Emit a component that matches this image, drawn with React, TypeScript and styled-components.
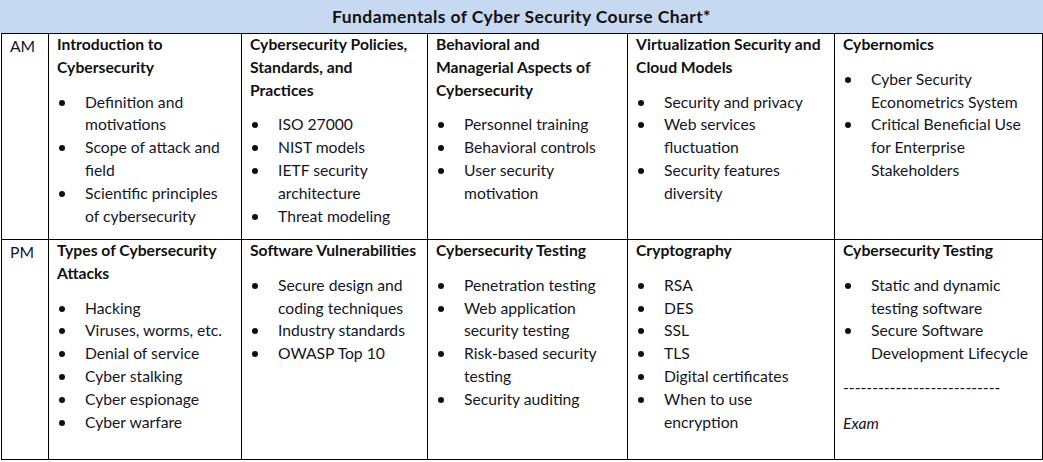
import React, { Fragment } from "react";
import styled, { createGlobalStyle } from "styled-components";

const GlobalStyle = createGlobalStyle`
  html, body {
    margin: 0;
    padding: 0;
    background: #ffffff;
  }
  body {
    font-family: Lato, "Open Sans", "Liberation Sans", sans-serif;
    color: #151525;
  }
`;

const Page = styled.div`
  width: 1043px;
  height: 462px;
  background: #fff;
`;

const TitleBar = styled.div`
  height: 33px;
  background: #c6d9f1;
  display: flex;
  align-items: center;
  justify-content: center;
  font-weight: 700;
  font-size: 17.5px;
  letter-spacing: 0.4px;
  color: #111;
`;

const Chart = styled.table`
  margin-left: 1px;
  width: 1041px;
  border-collapse: collapse;
  table-layout: fixed;
  border-top: 1px solid #000;

  td {
    border: 1px solid #000;
    vertical-align: top;
    padding: 0 8px;
    font-size: 15.7px;
    line-height: 22.8px;
  }
`;

const Row = styled.tr<{ $height: number }>`
  height: ${(p) => p.$height}px;
`;

const Label = styled.td`
  font-weight: 400;
  && {
    padding-top: 1px;
  }
`;

const Heading = styled.div`
  font-weight: 700;
  white-space: pre;
  margin: -1px 0 12px;
  color: #111;
`;

const List = styled.ul<{ $gap?: number }>`
  list-style: none;
  margin: 0 0 ${(p) => p.$gap ?? 0}px;
  padding: 0;
`;

const Item = styled.li`
  display: grid;
  grid-template-columns: 28px 1fr;
  white-space: pre;

  &::before {
    content: "";
    width: 6px;
    height: 6px;
    border-radius: 50%;
    background: #111;
    margin: 9px 0 0 2px;
  }
`;

const Rule = styled.div`
  margin-bottom: 13px;
  white-space: nowrap;
`;

const Note = styled.div`
  font-style: italic;
`;

type Topic = {
  title: string;
  items: string[];
  extra?: boolean;
};

type Session = {
  label: string;
  height: number;
  topics: Topic[];
};

const sessions: Session[] = [
  {
    label: "AM",
    height: 206,
    topics: [
      {
        title: "Introduction to\nCybersecurity",
        items: [
          "Definition and\nmotivations",
          "Scope of attack and\nfield",
          "Scientific principles\nof cybersecurity",
        ],
      },
      {
        title: "Cybersecurity Policies,\nStandards, and\nPractices",
        items: ["ISO 27000", "NIST models", "IETF security\narchitecture", "Threat modeling"],
      },
      {
        title: "Behavioral and\nManagerial Aspects of\nCybersecurity",
        items: ["Personnel training", "Behavioral controls", "User security\nmotivation"],
      },
      {
        title: "Virtualization Security and\nCloud Models",
        items: ["Security and privacy", "Web services\nfluctuation", "Security features\ndiversity"],
      },
      {
        title: "Cybernomics",
        items: [
          "Cyber Security\nEconometrics System",
          "Critical Beneficial Use\nfor Enterprise\nStakeholders",
        ],
      },
    ],
  },
  {
    label: "PM",
    height: 220,
    topics: [
      {
        title: "Types of Cybersecurity\nAttacks",
        items: [
          "Hacking",
          "Viruses, worms, etc.",
          "Denial of service",
          "Cyber stalking",
          "Cyber espionage",
          "Cyber warfare",
        ],
      },
      {
        title: "Software Vulnerabilities",
        items: ["Secure design and\ncoding techniques", "Industry standards", "OWASP Top 10"],
      },
      {
        title: "Cybersecurity Testing",
        items: [
          "Penetration testing",
          "Web application\nsecurity testing",
          "Risk-based security\ntesting",
          "Security auditing",
        ],
      },
      {
        title: "Cryptography",
        items: ["RSA", "DES", "SSL", "TLS", "Digital certificates", "When to use\nencryption"],
      },
      {
        title: "Cybersecurity Testing",
        items: ["Static and dynamic\ntesting software", "Secure Software\nDevelopment Lifecycle"],
        extra: true,
      },
    ],
  },
];

const widths = [47, 193, 186, 200, 207, 208];

function App() {
  return (
    <Fragment>
      <GlobalStyle />
      <Page>
        <TitleBar>Fundamentals of Cyber Security Course Chart*</TitleBar>
        <Chart>
          <colgroup>
            {widths.map((w, i) => (
              <col key={i} style={{ width: w }} />
            ))}
          </colgroup>
          <tbody>
            {sessions.map((s) => (
              <Row key={s.label} $height={s.height}>
                <Label>{s.label}</Label>
                {s.topics.map((t, i) => (
                  <td key={i}>
                    <Heading>{t.title}</Heading>
                    <List $gap={t.extra ? 11 : 0}>
                      {t.items.map((it) => (
                        <Item key={it}>{it}</Item>
                      ))}
                    </List>
                    {t.extra && (
                      <Fragment>
                        <Rule>{"-".repeat(27)}</Rule>
                        <Note>Exam</Note>
                      </Fragment>
                    )}
                  </td>
                ))}
              </Row>
            ))}
          </tbody>
        </Chart>
      </Page>
    </Fragment>
  );
}

export default App;
